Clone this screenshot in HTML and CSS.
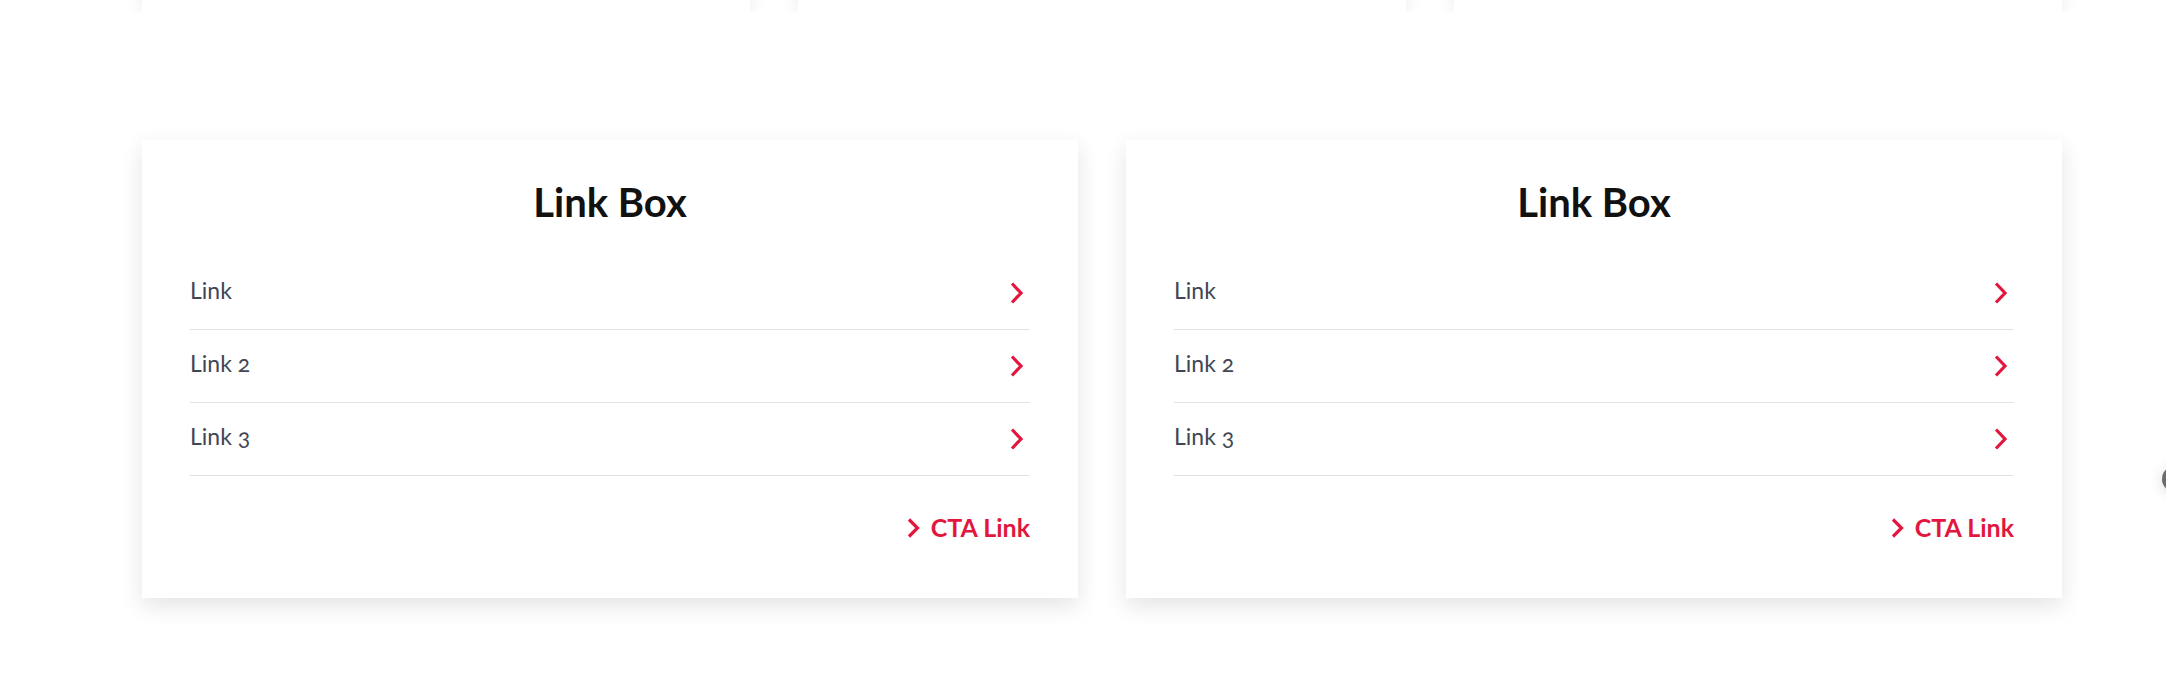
FILE: index.html
```html
<!DOCTYPE html>
<html lang="en">
<head>
<meta charset="utf-8">
<title>Link Box</title>
<link rel="stylesheet" href="styles.css">
</head>
<body>
  <div class="teaser-strip">
    <div class="teaser"></div>
    <div class="teaser"></div>
    <div class="teaser"></div>
  </div>

  <main class="linkbox-row">
    <section class="linkbox">
      <h2 class="linkbox-title">Link Box</h2>
      <ul class="linkbox-list">
        <li><a class="linkbox-item" href="#"><span class="linkbox-label">Link</span><svg class="chev" viewBox="0 0 13 22" width="13" height="22"><polyline points="2,1.5 11,11 2,20.5"/></svg></a></li>
        <li><a class="linkbox-item" href="#"><span class="linkbox-label">Link 2</span><svg class="chev" viewBox="0 0 13 22" width="13" height="22"><polyline points="2,1.5 11,11 2,20.5"/></svg></a></li>
        <li><a class="linkbox-item" href="#"><span class="linkbox-label">Link 3</span><svg class="chev" viewBox="0 0 13 22" width="13" height="22"><polyline points="2,1.5 11,11 2,20.5"/></svg></a></li>
      </ul>
      <div class="linkbox-footer">
        <a class="cta" href="#"><svg class="cta-chev" viewBox="0 0 13 20" width="13" height="20"><polyline points="2,1.5 10.5,10 2,18.5"/></svg><span>CTA Link</span></a>
      </div>
    </section>

    <section class="linkbox">
      <h2 class="linkbox-title">Link Box</h2>
      <ul class="linkbox-list">
        <li><a class="linkbox-item" href="#"><span class="linkbox-label">Link</span><svg class="chev" viewBox="0 0 13 22" width="13" height="22"><polyline points="2,1.5 11,11 2,20.5"/></svg></a></li>
        <li><a class="linkbox-item" href="#"><span class="linkbox-label">Link 2</span><svg class="chev" viewBox="0 0 13 22" width="13" height="22"><polyline points="2,1.5 11,11 2,20.5"/></svg></a></li>
        <li><a class="linkbox-item" href="#"><span class="linkbox-label">Link 3</span><svg class="chev" viewBox="0 0 13 22" width="13" height="22"><polyline points="2,1.5 11,11 2,20.5"/></svg></a></li>
      </ul>
      <div class="linkbox-footer">
        <a class="cta" href="#"><svg class="cta-chev" viewBox="0 0 13 20" width="13" height="20"><polyline points="2,1.5 10.5,10 2,18.5"/></svg><span>CTA Link</span></a>
      </div>
    </section>
  </main>

  <div class="edge-button"></div>
</body>
</html>
```

FILE: styles.css
```css
html, body {
  margin: 0;
  padding: 0;
  background: #ffffff;
}

body {
  font-family: Lato, "Open Sans", "Liberation Sans", sans-serif;
  width: 2166px;
  height: 676px;
  overflow: hidden;
  position: relative;
}

/* clipped cards of the previous section */
.teaser-strip {
  height: 12px;
  overflow: hidden;
  display: grid;
  grid-template-columns: repeat(3, 608px);
  column-gap: 48px;
  padding: 0 104px 0 142px;
}

.teaser {
  height: 60px;
  margin-top: -48px;
  background: #fff;
  box-shadow: 0 0 16px rgba(0, 0, 0, 0.09);
}

.linkbox-row {
  display: grid;
  grid-template-columns: 936px 936px;
  column-gap: 48px;
  padding: 0 104px 0 142px;
  margin-top: 128px;
}

.linkbox {
  background: #fff;
  box-shadow: 0 8px 22px rgba(0, 0, 0, 0.11);
  padding: 38px 48px 54px;
}

.linkbox-title {
  margin: 0 0 31px;
  text-align: center;
  font-size: 40px;
  line-height: 48px;
  font-weight: 700;
  color: #111111;
}

.linkbox-list {
  list-style: none;
  margin: 0;
  padding: 0;
}

.linkbox-list li {
  border-bottom: 1px solid #e3e3e3;
}

.linkbox-item {
  display: flex;
  align-items: center;
  justify-content: space-between;
  height: 72px;
  text-decoration: none;
}

.linkbox-label {
  font-size: 23px;
  line-height: 30px;
  padding-bottom: 6px;
  color: #414654;
  font-variant-numeric: oldstyle-nums;
}

.chev {
  margin-right: 7px;
  fill: none;
  stroke: #e3173e;
  stroke-width: 3.2;
  stroke-linejoin: miter;
}

.linkbox-footer {
  display: flex;
  justify-content: flex-end;
  margin-top: 36px;
}

.cta {
  display: flex;
  align-items: center;
  gap: 11px;
  text-decoration: none;
  color: #e3173e;
  font-size: 25px;
  line-height: 30px;
  font-weight: 700;
}

.cta span {
  padding-bottom: 2px;
}

.cta-chev {
  fill: none;
  stroke: #e3173e;
  stroke-width: 3.2;
  stroke-linejoin: miter;
}

.edge-button {
  position: absolute;
  right: -22px;
  top: 466px;
  width: 26px;
  height: 26px;
  border-radius: 50%;
  background: #6b6b6b;
  box-shadow: 0 2px 14px rgba(0, 0, 0, 0.15);
}
```
